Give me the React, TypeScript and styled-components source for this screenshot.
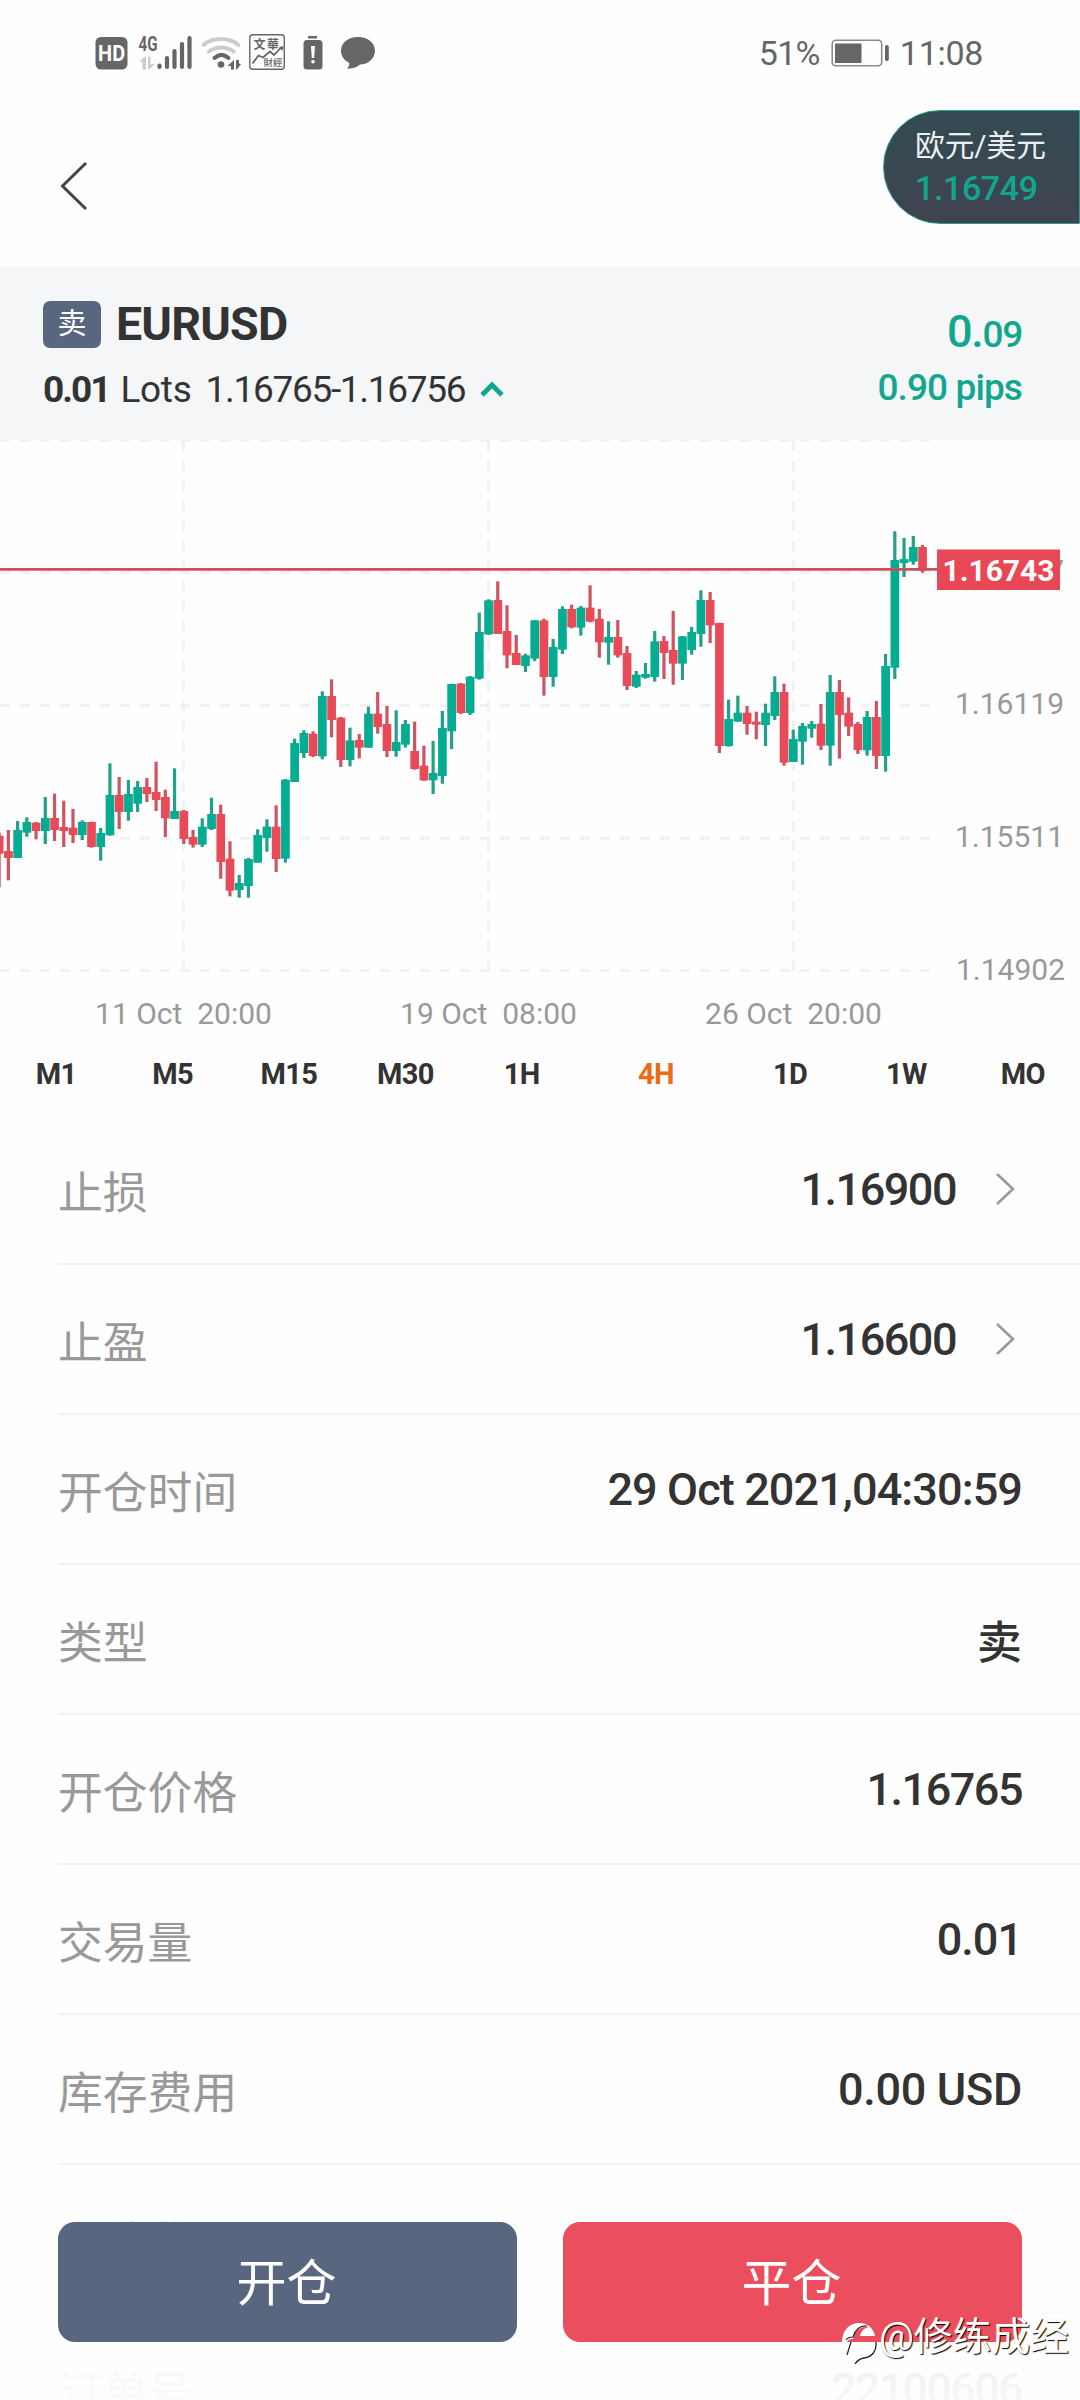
import React from "react";
import styled, { createGlobalStyle } from "styled-components";

const SANS = 'Roboto, "Noto Sans CJK SC", sans-serif';
const GREEN = "#13a68f";
const INK = "#333333";

const Global = createGlobalStyle`
  body { margin: 0; background: #fefefe; }
  * { box-sizing: border-box; }
`;

const Page = styled.main`
  position: relative;
  width: 1080px;
  height: 2400px;
  overflow: hidden;
  background: #fefefe;
  font-family: ${SANS};
  color: ${INK};
`;

const StatusBar = styled.div`
  height: 107px;
  padding: 0 97px 0 95px;
  display: flex;
  justify-content: space-between;
  align-items: flex-start;
  color: #666;
`;

const StatusIcons = styled.svg`
  display: block;
  width: 285px;
  height: 40px;
  margin-top: 33px;
`;

const StatusRight = styled.div`
  display: flex;
  align-items: center;
  height: 40px;
  margin-top: 33px;
  font-size: 34px;
  line-height: 40px;
`;

const Percent = styled.span`
  letter-spacing: -0.7px;
`;

const Clock = styled.span`
  letter-spacing: -0.3px;
`;

const Battery = styled.svg`
  width: 60px;
  height: 30px;
  margin: 0 9px 0 11px;
`;

const NavBar = styled.header`
  height: 160px;
  display: flex;
  justify-content: space-between;
  align-items: flex-start;
  padding-left: 57px;
`;

const Back = styled.svg`
  width: 34px;
  height: 52px;
  margin-top: 53px;
`;

const PricePill = styled.div`
  width: 197px;
  height: 114px;
  margin-top: 3px;
  padding: 16px 0 0 31px;
  border: 1.5px solid #2a9f8c;
  border-radius: 57px 0 0 57px;
  background: linear-gradient(#334b52, #3f4350);
  color: #eceff0;
  font-size: 29.7px;
  line-height: 38px;
`;

const PillPrice = styled.div`
  color: ${GREEN};
  font-size: 34px;
  font-weight: 500;
  line-height: 46px;
  letter-spacing: -0.4px;
`;

const Summary = styled.section`
  height: 173px;
  padding: 34px 58px 0 43px;
  background: #f4f6f8;
  display: flex;
  justify-content: space-between;
`;

const SummaryTop = styled.div`
  display: flex;
  align-items: center;
  gap: 15px;
  height: 47px;
`;

const SideTag = styled.span`
  width: 58px;
  height: 47px;
  border-radius: 7px;
  background: #58667f;
  color: #fff;
  font-size: 29px;
  line-height: 46px;
  text-align: center;
`;

const Symbol = styled.h1`
  margin: 0;
  font-size: 46.5px;
  line-height: 49px;
  font-weight: 700;
  letter-spacing: -0.8px;
`;

const LotLine = styled.div`
  display: flex;
  align-items: center;
  margin-top: 18px;
  height: 46px;
  font-size: 37px;
`;

const Lots = styled.b`
  font-weight: 700;
  letter-spacing: -2px;
`;

const LotUnit = styled.span`
  margin: 0 14px 0 11px;
  letter-spacing: -0.3px;
`;

const LotRange = styled.span`
  letter-spacing: -1.3px;
`;

const UpMark = styled.svg`
  width: 24px;
  height: 18px;
  margin-left: 15px;
`;

const Profit = styled.div`
  padding-top: 3px;
  color: ${GREEN};
  text-align: right;
  font-weight: 500;
  font-size: 37px;
  line-height: 56px;
  letter-spacing: -0.9px;
`;

const ProfitMoney = styled.div`
  height: 56px;
  letter-spacing: -1.3px;
`;

const ProfitWhole = styled.span`
  font-size: 45px;
`;

const Chart = styled.svg`
  display: block;
  width: 1080px;
  height: 600px;
  font-family: ${SANS};
`;

const Periods = styled.nav`
  display: flex;
  height: 75px;
  margin: 0 -1px 0 -2px;
`;

const Period = styled.span<{ $active?: boolean }>`
  flex: ${(p) => (p.$active ? "0 0 152px" : "1 1 0")};
  color: ${(p) => (p.$active ? "#ee6b16" : INK)};
  text-align: center;
  font-size: 29px;
  line-height: 69px;
  font-weight: 700;
  letter-spacing: -0.6px;
`;

const Row = styled.div`
  margin-left: 58px;
  padding-right: 58px;
  height: 150px;
  display: flex;
  align-items: center;
  border-bottom: 2px solid #f0f3f3;
`;

const Label = styled.span`
  flex: 1;
  color: #999;
  font-size: 44.8px;
`;

const Value = styled.span<{ $track: number }>`
  padding-top: 1px;
  font-size: 45px;
  font-weight: 500;
  letter-spacing: ${(p) => p.$track}px;
`;

const Arrow = styled.svg`
  width: 24px;
  height: 36px;
  margin: 0 4px 0 38px;
`;

const Footer = styled.footer`
  position: absolute;
  left: 0;
  right: 0;
  bottom: 0;
  height: 240px;
  padding: 62px 58px 58px;
  display: flex;
  gap: 46px;
  background: linear-gradient(rgba(254, 254, 254, 0.3), rgba(254, 254, 254, 0.82) 30%, rgba(254, 254, 254, 0.93) 85%, rgba(254, 254, 254, 0.97));
`;

const Action = styled.button<{ $tone: string }>`
  flex: 1;
  height: 120px;
  padding: 4px 2px 0 0;
  border: 0;
  border-radius: 17px;
  background: ${(p) => p.$tone};
  color: #fff;
  font-family: ${SANS};
  font-size: 50px;
  line-height: 60px;
`;

const Watermark = styled.div`
  position: absolute;
  left: 841px;
  top: 2309px;
  display: flex;
  align-items: center;
  height: 56px;
  color: #fff;
  font-size: 38.8px;
  line-height: 56px;
  text-shadow: 1px 1px 1px #000;
  white-space: nowrap;
`;

const WatermarkMark = styled.svg`
  width: 38px;
  height: 44px;
  margin-top: 10px;
  flex: none;
`;

type Bar = ["G" | "R", number, number, number, number];

/* [direction, high, body top, body bottom, low], in thirds of a pixel */
const sessions: { base: number; bars: Bar[] }[] = [
  {
    base: 600,
    bars: [
      ["R", 578, 587, 641, 742], ["R", 570, 633, 654, 721], ["G", 543, 570, 654, 654], ["G", 532, 546, 578, 590],
      ["R", 546, 548, 573, 598], ["G", 471, 534, 573, 612], ["R", 461, 534, 570, 603], ["R", 482, 561, 573, 621],
      ["R", 507, 563, 585, 609], ["G", 541, 546, 585, 600], ["R", 545, 546, 621, 623], ["G", 564, 579, 621, 662],
      ["G", 370, 465, 586, 587], ["R", 411, 465, 516, 567], ["G", 420, 462, 516, 542], ["G", 423, 441, 491, 516],
      ["R", 414, 441, 462, 486], ["R", 365, 456, 480, 513], ["R", 449, 471, 535, 591], ["G", 385, 513, 537, 537],
      ["R", 510, 513, 597, 612], ["R", 570, 591, 614, 623], ["G", 535, 560, 614, 621], ["G", 473, 522, 567, 570],
      ["R", 494, 522, 666, 716], ["R", 604, 656, 752, 769], ["G", 705, 729, 750, 773], ["G", 654, 657, 738, 773],
      ["G", 568, 585, 668, 668], ["G", 538, 560, 594, 635], ["R", 496, 560, 657, 696],
    ],
  },
  {
    base: 360,
    bars: [
      ["G", 657, 659, 896, 908], ["G", 536, 549, 666, 666], ["G", 511, 519, 579, 594], ["R", 514, 521, 588, 591],
      ["G", 394, 408, 589, 598], ["R", 358, 408, 480, 532], ["R", 471, 473, 600, 621], ["G", 503, 541, 600, 619],
      ["R", 522, 540, 563, 595], ["G", 440, 461, 563, 564], ["R", 396, 461, 501, 521], ["R", 438, 492, 573, 591],
      ["G", 451, 546, 573, 590], ["G", 480, 492, 554, 563], ["R", 485, 573, 627, 629], ["R", 557, 617, 661, 663],
      ["G", 543, 639, 661, 702], ["G", 453, 504, 648, 671], ["G", 371, 372, 514, 567], ["R", 369, 371, 459, 462],
      ["G", 348, 350, 459, 465], ["G", 158, 216, 356, 359], ["G", 118, 121, 223, 225], ["R", 64, 120, 222, 222],
      ["R", 136, 213, 286, 325], ["R", 225, 279, 315, 315], ["G", 281, 286, 318, 336], ["G", 180, 181, 296, 303],
      ["R", 176, 181, 351, 407], ["G", 237, 261, 351, 380], ["G", 139, 147, 269, 282], ["R", 134, 147, 202, 205],
      ["G", 138, 143, 203, 227], ["R", 76, 143, 185, 187], ["R", 147, 176, 247, 293], ["G", 184, 231, 248, 314],
      ["R", 180, 231, 286, 293],
    ],
  },
  {
    base: 180,
    bars: [
      ["R", 438, 459, 558, 570], ["G", 513, 524, 560, 564], ["G", 489, 522, 533, 536], ["G", 393, 424, 531, 545],
      ["R", 408, 423, 459, 537], ["R", 333, 450, 491, 554], ["G", 408, 409, 491, 540], ["G", 381, 396, 450, 464],
      ["G", 271, 300, 402, 440], ["R", 276, 300, 376, 429], ["R", 368, 369, 738, 759], ["G", 599, 657, 738, 740],
      ["G", 587, 638, 665, 665], ["R", 618, 638, 672, 704], ["R", 635, 665, 674, 718], ["G", 611, 638, 675, 738],
      ["G", 529, 576, 648, 660], ["R", 551, 576, 788, 797], ["G", 689, 717, 786, 786], ["G", 669, 678, 725, 794],
      ["G", 663, 672, 686, 713], ["R", 612, 671, 737, 750], ["G", 525, 576, 737, 797], ["R", 540, 576, 645, 776],
      ["R", 592, 638, 680, 708], ["R", 666, 672, 750, 762], ["G", 633, 651, 751, 767], ["R", 603, 651, 768, 807],
      ["G", 462, 498, 768, 815], ["G", 94, 180, 503, 537], ["G", 114, 177, 189, 231], ["G", 108, 141, 185, 194],
      ["R", 135, 141, 212, 218],
    ],
  },
];

const candles = sessions.flatMap((s) => s.bars.map(([d, ...v]) => ({ d, v: v.map((n) => (n + s.base) / 3) })));

const PriceChart = () => (
  <Chart viewBox="0 0 1080 600">
    <g stroke="#f1f1f1" strokeWidth="3" strokeDasharray="10 10">
      {[183.4, 488.5, 793.4].map((x) => (
        <line key={x} x1={x} x2={x} y1="1" y2="531" />
      ))}
      {[132.5, 265.5, 398.3, 530.5].map((y) => (
        <line key={y} x1="0" x2="932" y1={y} y2={y} />
      ))}
    </g>
    <line x1="0" x2="932" y1="0" y2="0" stroke="#eeeff0" strokeWidth="3" strokeDasharray="10 10" />
    {candles.map(({ d, v: [high, top, bottom, low] }, i) => {
      const x = 8.35 + 9.234 * (i - 1);
      return (
        <g key={i}>
          <rect x={x - 1.6} y={high} width="3.2" height={low - high} fill={d === "G" ? "#22a088" : "#cd5461"} />
          <rect x={x - 4.3} y={top} width="8.7" height={bottom - top} fill={d === "G" ? "#04ad91" : "#e84a57"} />
        </g>
      );
    })}
    <line x1="0" x2="938" y1="129.3" y2="129.3" stroke="#d04d5a" strokeWidth="2.8" />
    <g fill="#999" fontSize="30" textAnchor="end">
      <text x="1064" y="141">1.16727</text>
      <text x="1064" y="274">1.16119</text>
      <text x="1064" y="407">1.15511</text>
      <text x="1065" y="540">1.14902</text>
    </g>
    <rect x="937" y="109.5" width="123" height="40.5" fill="#e84855" />
    <text x="998.5" y="141" textAnchor="middle" fill="#fff" fontSize="30" fontWeight="700">1.16743</text>
    <g fill="#999" fontSize="30" textAnchor="middle">
      <text x="183.5" y="583.5">{"11 Oct\u00a0 20:00"}</text>
      <text x="488.5" y="583.5">{"19 Oct\u00a0 08:00"}</text>
      <text x="793.5" y="583.5">{"26 Oct\u00a0 20:00"}</text>
    </g>
  </Chart>
);

const periods = ["M1", "M5", "M15", "M30", "1H", "4H", "1D", "1W", "MO"];

const rows: { label: string; value: string; track?: number; link?: boolean }[] = [
  { label: "止损", value: "1.16900", track: -1.5, link: true },
  { label: "止盈", value: "1.16600", track: -1.5, link: true },
  { label: "开仓时间", value: "29 Oct 2021,04:30:59", track: -0.9 },
  { label: "类型", value: "卖" },
  { label: "开仓价格", value: "1.16765", track: -1.5 },
  { label: "交易量", value: "0.01", track: -1 },
  { label: "库存费用", value: "0.00 USD", track: -0.3 },
  { label: "手续费", value: "" },
  { label: "订单号", value: "22100606", track: -1.7 },
];

export default function App() {
  return (
    <Page>
      <Global />
      <StatusBar>
        <StatusIcons viewBox="95 33 285 40" fill="#666" fontFamily="Roboto, sans-serif">
          <rect x="95.5" y="37" width="32" height="32.5" rx="5.5" />
          <text x="111.6" y="61" fontSize="21.5" fontWeight="700" fill="#fff" textAnchor="middle" textLength="27" lengthAdjust="spacingAndGlyphs">HD</text>
          <text x="138.5" y="51" fontSize="21" fontWeight="700" textLength="19" lengthAdjust="spacingAndGlyphs">4G</text>
          <path fill="#ccc" d="M139 61.500l7-5.500v13.500h-3.500v-8zM148 56.500h2.500v8l4.500-1-5 5.500h-2z" />
          <g stroke="#666" strokeWidth="4.200" strokeLinecap="round">
            <path d="M159.500 65.500v1.500M167 58v9M174.500 51v16M182 44v23M189.500 38v29" />
          </g>
          <g fill="none" strokeLinecap="round" strokeWidth="4">
            <path stroke="#ccc" d="M203.500 45c9.500-8 25.500-8 35 0M209 51.500c7-5.500 17.500-5.500 24.500 0" />
            <path stroke="#666" d="M214.500 58c4.500-4 9.500-4 14 0" />
          </g>
          <circle cx="221" cy="64.500" r="3.300" />
          <path d="M227.500 66l6.500-6v9.500h-3v-3.500zM236 60h3v3.500l2 .5-4 5.500h-1z" />
          <rect x="249.800" y="34.800" width="34.500" height="34.500" rx="3" fill="none" stroke="#666" strokeWidth="1.400" />
          <g fontFamily='"Noto Sans CJK TC", sans-serif' fontWeight="700">
            <text x="253.500" y="48.500" fontSize="12">文</text>
            <text x="267" y="48.500" fontSize="12">華</text>
            <text x="263.500" y="66" fontSize="9.500" fontWeight="500">財經</text>
          </g>
          <path d="M252.500 63.500l6-8 4.500 2 7-6 4 3.500 7.500-8" fill="none" stroke="#666" strokeWidth="1.800" />
          <path d="M283.500 46l-1 5-3.500-3.500z" />
          <path d="M308 36h9v2.500h-9z" />
          <rect x="303.500" y="40" width="19" height="29.500" rx="3.500" />
          <path d="M311 46h4l-.8 12h-2.400z" fill="#fff" />
          <circle cx="313" cy="61.800" r="1.800" fill="#fff" />
          <path d="M358 37c10 0 17 6 17 13.800 0 7.700-7 13.700-15 13.700-3.500 3-8 4.300-13 4.300 2-2 2.500-4 2.200-6C344 60.500 341 56 341 50.800 341 43 348 37 358 37z" />
        </StatusIcons>
        <StatusRight>
          <Percent>51%</Percent>
          <Battery viewBox="0 0 60 30">
            <rect x="1.200" y="2.200" width="49.500" height="25.600" rx="3.500" fill="none" stroke="#8b8b8b" strokeWidth="1.600" />
            <rect x="4" y="5.500" width="26.500" height="19.500" fill="#666" />
            <rect x="54" y="7" width="3.800" height="16" rx="1.800" fill="#666" />
          </Battery>
          <Clock>11:08</Clock>
        </StatusRight>
      </StatusBar>
      <NavBar>
        <Back viewBox="0 0 34 52" fill="none" stroke="#444" strokeWidth="3">
          <path d="M29 3L5.500 26 29 49" />
        </Back>
        <PricePill>
          欧元/美元
          <PillPrice>1.16749</PillPrice>
        </PricePill>
      </NavBar>
      <Summary>
        <div>
          <SummaryTop>
            <SideTag>卖</SideTag>
            <Symbol>EURUSD</Symbol>
          </SummaryTop>
          <LotLine>
            <Lots>0.01</Lots>
            <LotUnit>Lots</LotUnit>
            <LotRange>1.16765-1.16756</LotRange>
            <UpMark viewBox="0 0 24 18" fill="none" stroke={GREEN} strokeWidth="4.800">
              <path d="M2 15L12 5l10 10" />
            </UpMark>
          </LotLine>
        </div>
        <Profit>
          <ProfitMoney>
            <ProfitWhole>0.</ProfitWhole>09
          </ProfitMoney>
          <div>0.90 pips</div>
        </Profit>
      </Summary>
      <PriceChart />
      <Periods>
        {periods.map((p) => (
          <Period key={p} $active={p === "4H"}>{p}</Period>
        ))}
      </Periods>
      {rows.map((r) => (
        <Row key={r.label}>
          <Label>{r.label}</Label>
          <Value $track={r.track ?? 0}>{r.value}</Value>
          {r.link && (
            <Arrow viewBox="0 0 24 36" fill="none" stroke="#999" strokeWidth="2.600">
              <path d="M3 3l16 15L3 33" />
            </Arrow>
          )}
        </Row>
      ))}
      <Footer>
        <Action $tone="#58667f">开仓</Action>
        <Action $tone="#eb4f5d">平仓</Action>
      </Footer>
      <Watermark>
        <WatermarkMark viewBox="0 0 38 44">
          <path d="M1 22C1 10 9 3 18 3c8 0 14 4 16 13H19c1-5 4-8 9-9-9-1-14 4-16 12-5 0-6 2-7 6h5L6 36C3 33 1 28 1 22z" fill="#fff" />
          <path d="M35 22c1 9-4 15-12 16-4 .5-7 3-9 6" fill="none" stroke="#222" strokeWidth="1.300" />
          <path d="M5 20c2-3 5-3 7-3 2-7 7-12 14-11M10 22L6 35" fill="none" stroke="#222" strokeWidth="1.200" />
        </WatermarkMark>
        @修练成经
      </Watermark>
    </Page>
  );
}
